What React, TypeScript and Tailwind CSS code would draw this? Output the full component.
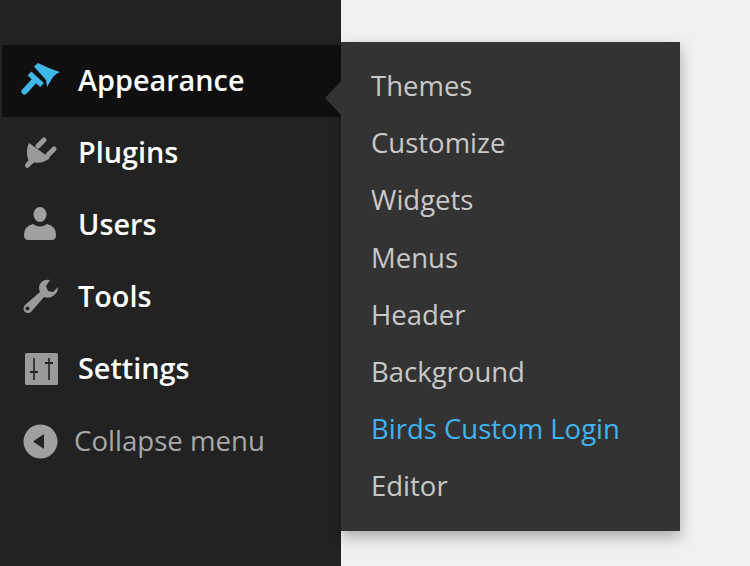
const font = { fontFamily: '"Open Sans", sans-serif' };

function Brush() {
  return (
    <svg width="42" height="36" viewBox="0 0 42 36" className="shrink-0">
      <path fill="#3fb8e8" d="M14 4.5 L18 1 Q30 7 40 10 Q35 12 33 15 L27 25 L26 18 Z" />
      <path stroke="#3fb8e8" strokeWidth="5.5" fill="none" d="M9.5 11.5 L22 23" />
      <path stroke="#3fb8e8" strokeWidth="6" strokeLinecap="round" fill="none" d="M4.5 29.5 L15 18" />
    </svg>
  );
}
function Plug() {
  return (
    <svg width="36" height="36" viewBox="0 0 36 36" className="shrink-0">
      <path fill="#9a9a9a" d="M6 8 L27 23 Q20 29 11 27.5 L6 32 Q4 34 2.5 32 Q1 30 3 28 L5.5 25.5 Q2 16 6 8 Z" />
      <path stroke="#9a9a9a" strokeWidth="5" strokeLinecap="round" d="M15 11 L21 5 M25 20 L31 14" />
    </svg>
  );
}
function User() {
  return (
    <svg width="36" height="36" viewBox="0 0 36 36" className="shrink-0">
      <ellipse cx="17" cy="7.5" rx="6.5" ry="7.5" fill="#a0a0a0" />
      <path fill="#a0a0a0" d="M1 28 Q1 19 10 17 Q17 22 24 17 Q33 19 33 28 Q33 33 29 33 L5 33 Q1 33 1 28 Z" />
    </svg>
  );
}
function Wrench() {
  return (
    <svg width="36" height="36" viewBox="0 0 36 36" className="shrink-0">
      <path fill="#9a9a9a" fillRule="evenodd" d="M27 1 Q20 0 17 5 Q15 9 17 13 L2 26 Q-1 30 2 33 Q5 35 8 33 L21 18 Q26 20 30 17 Q35 14 35 8 L30 13 L25 12 L23 7 Z M4.5 27.5 a2 2 0 1 0 0.01 0 Z" />
    </svg>
  );
}
function Sliders() {
  return (
    <svg width="33" height="32" viewBox="0 0 33 32" className="shrink-0 ml-[2px]">
      <rect x="0" y="0" width="33" height="32" rx="1.5" fill="#9a9a9a" />
      <path stroke="#222" strokeWidth="1.6" d="M9 5 V27 M24 5 V27" fill="none" />
      <path stroke="#222" strokeWidth="2.2" d="M5 19 H13 M20 10 H28" fill="none" />
    </svg>
  );
}
function CollapseIcon() {
  return (
    <svg width="35" height="35" viewBox="0 0 35 35" className="shrink-0">
      <circle cx="17.5" cy="17.5" r="17" fill="#a0a0a0" />
      <path fill="#222" d="M10 17.5 L21 10 V25 Z" />
    </svg>
  );
}

const rows = [
  { label: 'Plugins', icon: <Plug /> },
  { label: 'Users', icon: <User /> },
  { label: 'Tools', icon: <Wrench /> },
  { label: 'Settings', icon: <Sliders /> },
];

const sub = ['Themes', 'Customize', 'Widgets', 'Menus', 'Header', 'Background', 'Birds Custom Login', 'Editor'];

export default function App() {
  return (
    <div className="flex items-start w-[750px] h-[566px] overflow-hidden bg-[#f1f1f1]" style={font}>
      <div className="w-[341px] h-[566px] shrink-0 bg-[#222222] pt-[45px] pl-[2px]">
        <div className="h-[72px] flex items-center bg-[#0f0f0f] pl-[18px] gap-[16px] pb-[2px] text-white text-[28.8px] font-semibold">
          <Brush />
          <span>Appearance</span>
        </div>
        {rows.map((r) => (
          <div key={r.label} className="h-[72px] flex items-center pl-[21px] pb-[2px] text-white text-[28.8px] font-semibold">
            <div className="w-[55px] flex items-center pt-[2px]">{r.icon}</div>
            <span>{r.label}</span>
          </div>
        ))}
        <div className="h-[72px] flex items-center pl-[21px] gap-[16px] text-[#a8a8a8] text-[27.6px]">
          <CollapseIcon />
          <span>Collapse menu</span>
        </div>
      </div>
      <div className="relative mt-[42px] w-[339px] h-[489px] shrink-0 bg-[#333333] pt-[15px] pl-[30px] shadow-[0_6px_14px_rgba(0,0,0,0.3)] text-[27.5px] text-[#c8c8c8]">
        <div className="absolute left-[-16px] top-[39px] w-0 h-0 border-y-[17px] border-y-transparent border-r-[16px] border-r-[#333333]" />
        {sub.map((s) => (
          <div key={s} className={`h-[57.2px] leading-[57px] ${s === 'Birds Custom Login' ? 'text-[#3fb4f0]' : ''}`}>{s}</div>
        ))}
      </div>
    </div>
  );
}
